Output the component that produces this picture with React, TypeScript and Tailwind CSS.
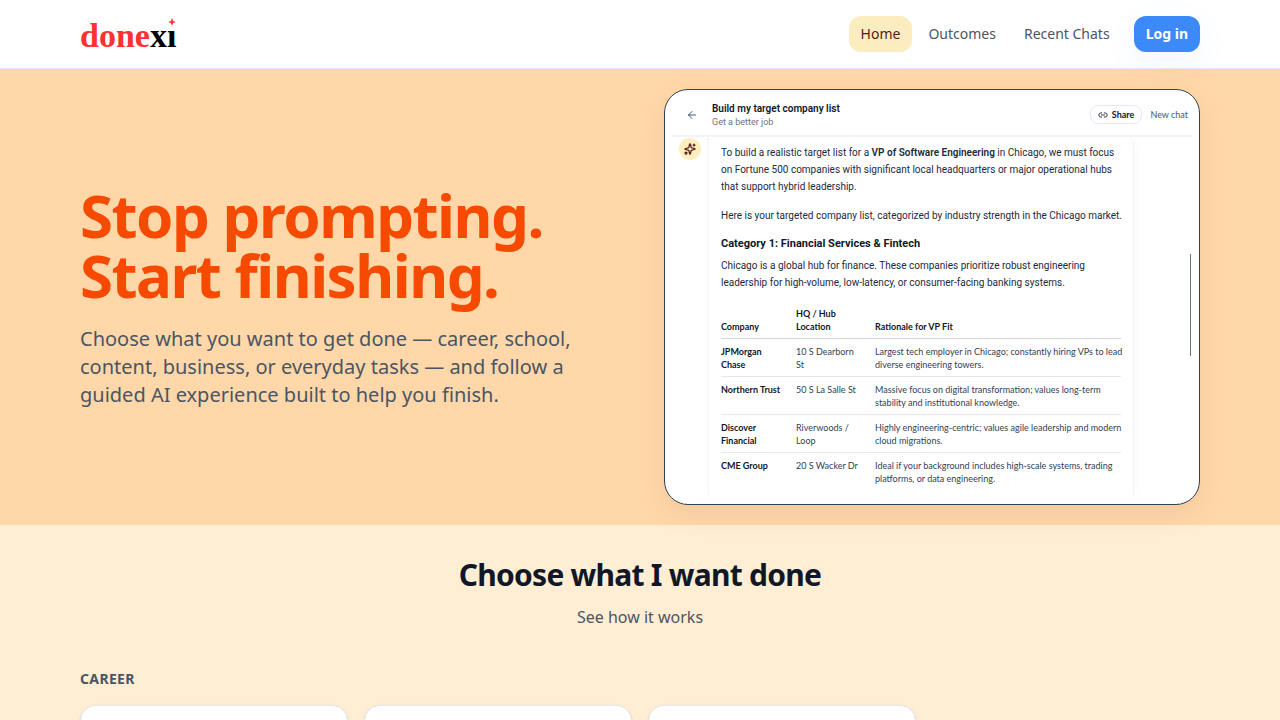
import clsx from "clsx";
import { ArrowLeft, Link2, Sparkles } from "lucide-react";

interface NavItem {
    label: string,
    href: string,
    active?: boolean
}

interface CompanyRow {
    company: string,
    location: string,
    rationale: string
}

const navItems: NavItem[] = [
    { label: "Home", href: "#home", active: true },
    { label: "Outcomes", href: "#outcomes" },
    { label: "Recent Chats", href: "#chats" },
];

const companies: CompanyRow[] = [
    { company: "JPMorgan Chase", location: "10 S Dearborn St", rationale: "Largest tech employer in Chicago; constantly hiring VPs to lead\ndiverse engineering towers." },
    { company: "Northern Trust", location: "50 S La Salle St", rationale: "Massive focus on digital transformation; values long-term\nstability and institutional knowledge." },
    { company: "Discover Financial", location: "Riverwoods / Loop", rationale: "Highly engineering-centric; values agile leadership and modern\ncloud migrations." },
    { company: "CME Group", location: "20 S Wacker Dr", rationale: "Ideal if your background includes high-scale systems, trading\nplatforms, or data engineering." },
];

function Logo() {
    return (
        <a href="#home" aria-label="donexi" className="relative block h-9 font-['Liberation_Serif',serif] text-[34px] leading-10 font-bold text-[#ff3131]">
            done<span className="text-black">xı</span>
            {/* spark in place of the dot on the i */}
            <svg viewBox="0 0 10 10" className="absolute top-0.5 right-0 size-2 fill-[#ff3131]">
                <path d="M5 0 L6.4 3.6 L10 5 L6.4 6.4 L5 10 L3.6 6.4 L0 5 L3.6 3.6 Z" />
            </svg>
        </a>
    )
}

function Header() {
    return (
        <header className="border-b border-slate-200 bg-white">
            <div className="mx-auto flex max-w-6xl items-center justify-between px-4 py-4">
                <Logo />
                <nav className="flex items-center gap-1 text-sm">
                    {navItems.map((item) => (
                        <a
                            key={item.label}
                            href={item.href}
                            className={clsx(
                                "rounded-xl px-3 py-2",
                                item.active ? "bg-[#fbedc0] text-[#541c15]" : "text-[#4b5563]"
                            )}
                        >
                            {item.label}
                        </a>
                    ))}
                    <button className="relative ml-2 rounded-xl bg-[#3c89f9] px-3 py-2 font-bold text-white shadow-[0_10px_30px_rgba(59,137,249,0.08)]">
                        Log in
                    </button>
                </nav>
            </div>
        </header>
    )
}

function ChatTable() {
    return (
        <table className="mt-4 w-full table-fixed text-left font-[Lato,sans-serif] text-[9px] leading-[13px]">
            <thead>
                <tr className="border-b border-gray-300 align-bottom text-gray-900">
                    <th className="w-[75px] pb-[5px] font-bold">Company</th>
                    <th className="w-[79px] pr-4 pb-[5px] font-bold">HQ / Hub Location</th>
                    <th className="pb-[5px] font-bold">Rationale for VP Fit</th>
                </tr>
            </thead>
            <tbody>
                {companies.map((row) => (
                    <tr key={row.company} className="border-b border-gray-200 align-top text-slate-700 last:border-0">
                        <td className="pt-1.5 pr-3 pb-[5px] font-bold text-gray-900">{row.company}</td>
                        <td className="pt-1.5 pr-4 pb-[5px]">{row.location}</td>
                        <td className="pt-1.5 pb-[5px] whitespace-pre">{row.rationale}</td>
                    </tr>
                ))}
            </tbody>
        </table>
    )
}

function ChatPreview() {
    return (
        <div className="relative flex h-104 flex-col overflow-hidden rounded-3xl border border-slate-700 bg-white p-[7px] font-[Roboto,sans-serif] text-[10px] leading-[17px] text-slate-800 shadow-[0_10px_30px_rgba(2,6,23,0.06)]">
            <div className="flex items-center border-b-2 border-slate-100 pr-1 pb-[3px] pl-3.5">
                <button aria-label="Back" className="mr-3.5 text-slate-600">
                    <ArrowLeft className="size-3" />
                </button>
                <div className="pt-[5px] pb-[3px]">
                    <h2 className="leading-[14px] font-semibold text-gray-900">Build my target company list</h2>
                    <p className="text-[9px] leading-[13px] text-gray-500">Get a better job</p>
                </div>
                <button className="ml-auto flex items-center gap-1 rounded-lg border border-slate-200 px-[7px] font-[Lato,sans-serif] text-[9px] font-bold text-gray-900">
                    <Link2 className="size-2.5" />
                    Share
                </button>
                <button className="ml-2 font-[Lato,sans-serif] text-[9px] text-gray-600">New chat</button>
            </div>
            <div className="flex min-h-0 flex-1 overflow-hidden">
                <div className="w-9 shrink-0 pt-px pl-[7px]">
                    <div className="flex size-[22px] items-center justify-center rounded-full bg-[#fdeebf] text-[#541c15]">
                        <Sparkles className="size-3" strokeWidth={2.5} />
                    </div>
                </div>
                <div className="w-[426px] rounded-tr-lg border-x border-slate-100 px-3 pt-[7px] shadow-[0_0_8px_rgba(2,6,23,0.03)]">
                    <p className="whitespace-nowrap">
                        To build a realistic target list for a <strong className="font-semibold">VP of Software Engineering</strong> in Chicago, we must focus<br />
                        on Fortune 500 companies with significant local headquarters or major operational hubs<br />
                        that support hybrid leadership.
                    </p>
                    <p className="mt-3 whitespace-nowrap">Here is your targeted company list, categorized by industry strength in the Chicago market.</p>
                    <h3 className="mt-[11px] text-[11px] font-bold text-gray-900">Category 1: Financial Services &amp; Fintech</h3>
                    <p className="mt-[5px] whitespace-nowrap">
                        Chicago is a global hub for finance. These companies prioritize robust engineering<br />
                        leadership for high-volume, low-latency, or consumer-facing banking systems.
                    </p>
                    <ChatTable />
                </div>
                <div className="mr-px ml-auto w-px pt-[117px]">
                    <div className="h-[102px] bg-gray-500" />
                </div>
            </div>
        </div>
    )
}

function Hero() {
    return (
        <section className="bg-orange-200">
            <div className="mx-auto grid max-w-6xl grid-cols-2 items-center gap-12 px-4 py-5">
                <div>
                    <h1 className="text-6xl leading-none font-bold tracking-tight text-orange-600">
                        Stop prompting.<br />
                        Start finishing.
                    </h1>
                    <p className="mt-5 text-xl text-[#4b5563]">
                        Choose what you want to get done — career, school, content, business, or everyday tasks — and follow a guided AI experience built to help you finish.
                    </p>
                </div>
                <ChatPreview />
            </div>
        </section>
    )
}

function Outcomes() {
    return (
        <section id="outcomes" className="bg-orange-100">
            <div className="mx-auto max-w-6xl px-4 py-8">
                <div className="text-center">
                    <h2 className="text-3xl font-bold tracking-tight text-gray-900">Choose what I want done</h2>
                    <p className="mt-3 text-[#4b5563]">See how it works</p>
                </div>
                <h3 className="mt-10 text-sm font-bold tracking-wide text-[#4b5563] uppercase">Career</h3>
                <div className="mt-4 grid grid-cols-4 gap-4">
                    {[1, 2, 3].map((card) => (
                        <div key={card} className="h-40 rounded-2xl border border-slate-200 bg-white shadow-sm" />
                    ))}
                </div>
            </div>
        </section>
    )
}

export default function App() {
    return (
        <div className="h-screen overflow-hidden bg-orange-100 font-['Noto_Sans',sans-serif]">
            <Header />
            <Hero />
            <Outcomes />
        </div>
    )
}
